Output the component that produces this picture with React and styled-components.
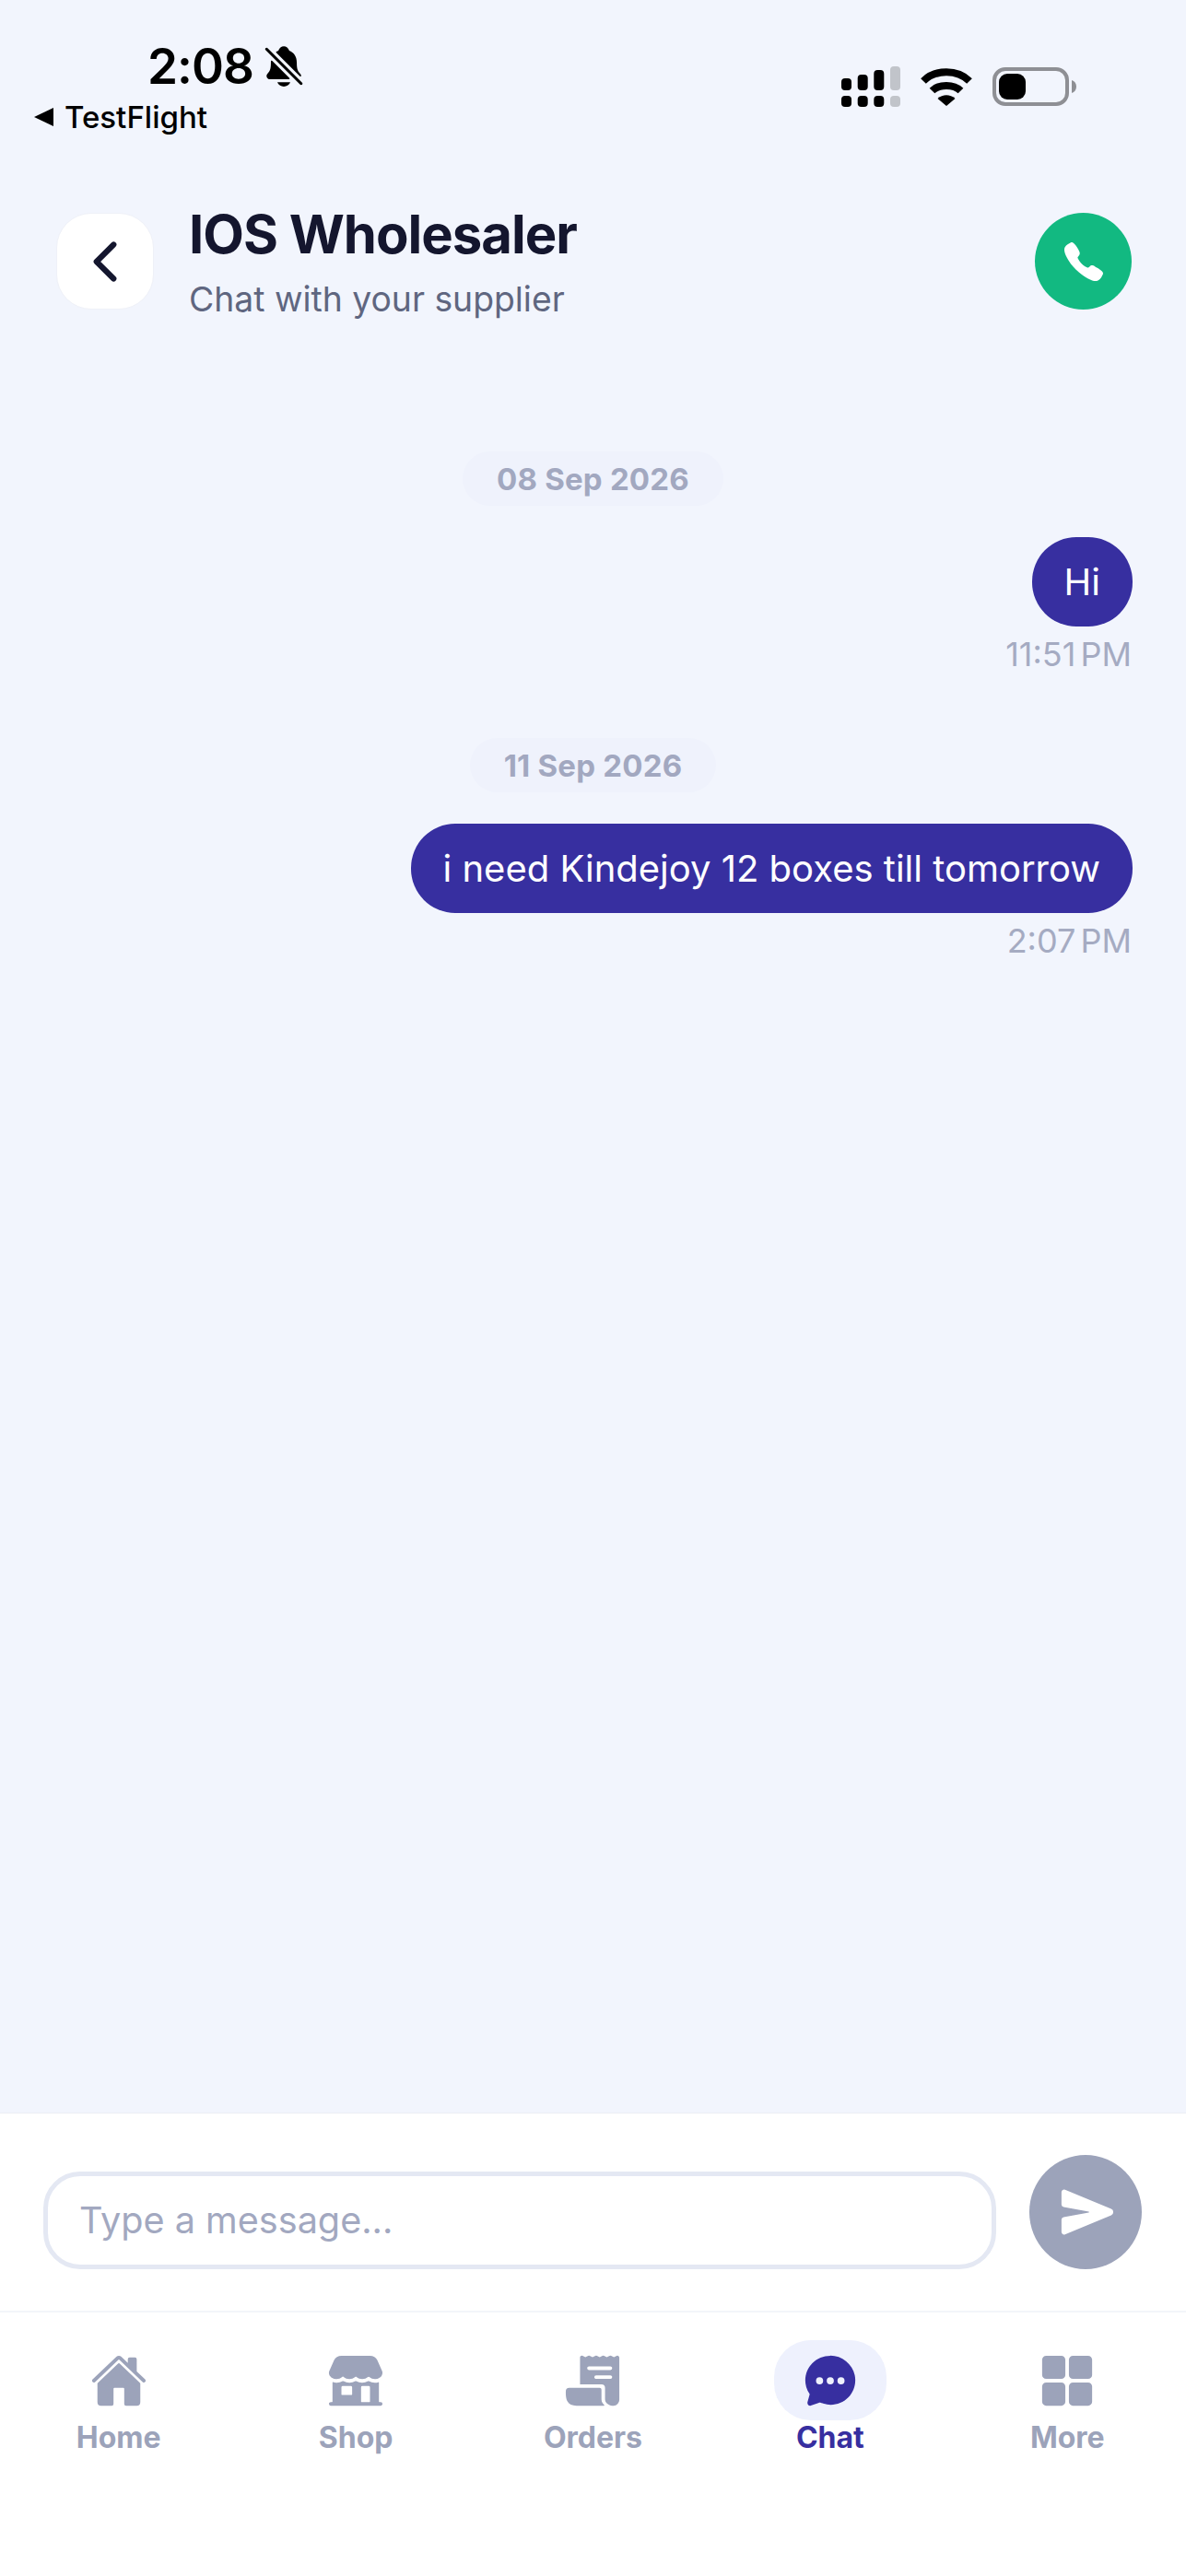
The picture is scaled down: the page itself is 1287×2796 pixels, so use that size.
import styled, { createGlobalStyle } from "styled-components"
import {
  IoCall,
  IoChatbubbleEllipses,
  IoChevronBack,
  IoGrid,
  IoHome,
  IoNotificationsOff,
  IoReceipt,
  IoSend,
  IoStorefront,
} from "react-icons/io5"

const GlobalStyle = createGlobalStyle`
  html, body {
    margin: 0;
    padding: 0;
    background: #f2f5fd;
  }
  * {
    box-sizing: border-box;
  }
`

const Page = styled.div`
  width: 1287px;
  height: 2796px;
  display: flex;
  flex-direction: column;
  background: #f2f5fd;
  font-family: Inter, "Noto Sans", sans-serif;
`

const StatusBar = styled.div`
  height: 231px;
  display: flex;
  justify-content: space-between;
  align-items: flex-start;
  padding: 42px 119px 0 37px;
  color: #000;
`

const StatusLeft = styled.div`
  display: flex;
  flex-direction: column;
`

const ClockRow = styled.div`
  display: flex;
  align-items: center;
  gap: 8px;
  height: 60px;
  padding-left: 123px;
  font-size: 53px;
  font-weight: 600;
  letter-spacing: -1px;
`

const BackToApp = styled.div`
  display: flex;
  align-items: center;
  gap: 12px;
  height: 40px;
  margin-top: 5px;
  font-size: 33px;
  font-weight: 500;
`

const StatusIcons = styled.div`
  display: flex;
  align-items: center;
  gap: 22px;
  margin-top: 30px;
`

const Header = styled.header`
  display: flex;
  align-items: flex-start;
  padding: 0 59px 0 61px;
`

const BackButton = styled.button`
  width: 106px;
  height: 105px;
  display: flex;
  align-items: center;
  justify-content: center;
  padding: 0;
  border: 1px solid #eff1f8;
  border-radius: 38px;
  background: #fff;
  color: #14162e;
`

const HeaderText = styled.div`
  flex: 1;
  margin-left: 38px;
`

const Title = styled.h1`
  margin: 0;
  font-size: 58px;
  line-height: 46px;
  font-weight: 700;
  letter-spacing: -1px;
  color: #14162e;
`

const Subtitle = styled.p`
  margin: 26px 0 0;
  font-size: 37.3px;
  line-height: 44px;
  font-weight: 400;
  color: #5f6680;
`

const CallButton = styled.button`
  width: 105px;
  height: 105px;
  display: flex;
  align-items: center;
  justify-content: center;
  padding: 0;
  border: none;
  border-radius: 50%;
  background: #12b981;
  color: #fff;
`

const Messages = styled.main`
  flex: 1;
  display: flex;
  flex-direction: column;
  padding: 143px 58px 0;
`

const DateGroup = styled.section`
  display: flex;
  flex-direction: column;
  align-items: flex-end;
  margin-bottom: 70px;
`

const DateChip = styled.div`
  align-self: center;
  height: 59px;
  display: flex;
  align-items: center;
  padding: 0 37px;
  border-radius: 30px;
  background: #eff2fc;
  font-size: 33px;
  font-weight: 700;
  letter-spacing: 0.2px;
  color: #a2a8c0;
`

const Bubble = styled.div`
  margin-top: 34px;
  height: 97px;
  display: flex;
  align-items: center;
  padding: 0 35px;
  border-radius: 48px;
  background: #372fa0;
  font-size: 40px;
  font-weight: 400;
  color: #fff;
`

const MessageTime = styled.div`
  margin-top: 9px;
  padding-right: 1px;
  font-size: 36px;
  line-height: 42px;
  word-spacing: -5px;
  color: #a5abc2;
`

const Composer = styled.div`
  height: 217px;
  display: flex;
  align-items: flex-end;
  gap: 36px;
  padding: 0 48px 45px 47px;
  border-top: 1px solid #eceef5;
  border-bottom: 2px solid #f3f5fa;
  background: #fff;
`

const MessageInput = styled.input`
  flex: 1;
  min-width: 0;
  height: 106px;
  padding: 0 34px;
  border: 5px solid #e4e8f3;
  border-radius: 40px;
  outline: none;
  background: #fff;
  font-family: inherit;
  font-size: 39.6px;
  color: #14162e;

  &::placeholder {
    color: #a2a8c0;
    opacity: 1;
  }
`

const SendButton = styled.button`
  width: 122px;
  height: 124px;
  flex-shrink: 0;
  display: flex;
  align-items: center;
  justify-content: center;
  padding: 0 0 0 4px;
  border: none;
  border-radius: 50%;
  background: #9ca3ba;
  color: #fff;
`

const Nav = styled.nav`
  height: 286px;
  display: grid;
  grid-template-columns: repeat(5, 1fr);
  padding-top: 30px;
  background: #fff;
`

const NavItem = styled.div`
  display: flex;
  flex-direction: column;
  align-items: center;
  color: ${(p) => (p.$active ? "#372fa0" : "#9ca3ba")};
`

const NavIcon = styled.div`
  width: 122px;
  height: 87px;
  display: flex;
  align-items: center;
  justify-content: center;
  border-radius: 40px;
  background: ${(p) => (p.$active ? "#eef1fd" : "transparent")};
`

const NavLabel = styled.div`
  margin-top: -1px;
  font-size: 32px;
  line-height: 40px;
  font-weight: 700;
`

const SignalIcon = () => (
  <svg width="64" height="44" viewBox="0 0 64 44">
    <rect x="0" y="13" width="11" height="13" rx="4" fill="#000" />
    <rect x="17.7" y="9" width="11" height="17" rx="4" fill="#000" />
    <rect x="35.3" y="4" width="11" height="22" rx="4" fill="#000" />
    <rect x="53" y="0" width="11" height="26" rx="4" fill="#c1c4ca" />
    <rect x="0" y="32" width="11" height="12" rx="4" fill="#000" />
    <rect x="17.7" y="32" width="11" height="12" rx="4" fill="#000" />
    <rect x="35.3" y="32" width="11" height="12" rx="4" fill="#000" />
    <rect x="53" y="32" width="11" height="12" rx="4" fill="#c1c4ca" />
  </svg>
)

const WifiIcon = () => (
  <svg width="56" height="41" viewBox="0 0 56 41">
    <path d="M3 14C16 1 40 1 53 14" fill="none" stroke="#000" strokeWidth="8" />
    <path d="M12.5 24.5C20 17 36 17 43.5 24.5" fill="none" stroke="#000" strokeWidth="8" />
    <path d="M18.5 33C24 28 32 28 37.5 33L28 41Z" fill="#000" />
  </svg>
)

const BatteryIcon = () => (
  <svg width="91" height="42" viewBox="0 0 91 42">
    <rect x="2" y="2" width="79" height="38" rx="12" fill="none" stroke="#8e8f94" strokeWidth="4" />
    <rect x="7" y="7" width="29" height="28" rx="9" fill="#000" />
    <path d="M86 14c3 1 5 3.500 5 7s-2 6-5 7Z" fill="#8e8f94" />
  </svg>
)

const navItems = [
  { label: "Home", icon: IoHome },
  { label: "Shop", icon: IoStorefront },
  { label: "Orders", icon: IoReceipt },
  { label: "Chat", icon: IoChatbubbleEllipses, active: true },
  { label: "More", icon: IoGrid },
]

const chat = [
  { date: "08 Sep 2026", text: "Hi", time: "11:51 PM" },
  { date: "11 Sep 2026", text: "i need Kindejoy 12 boxes till tomorrow", time: "2:07 PM" },
]

const App = () => {
  return (
    <Page>
      <GlobalStyle />
      <StatusBar>
        <StatusLeft>
          <ClockRow>
            2:08
            <IoNotificationsOff size={50} />
          </ClockRow>
          <BackToApp>
            <svg width="21" height="20" viewBox="0 0 21 20">
              <path d="M21 0V20L0 10Z" fill="#000" />
            </svg>
            TestFlight
          </BackToApp>
        </StatusLeft>
        <StatusIcons>
          <SignalIcon />
          <WifiIcon />
          <BatteryIcon />
        </StatusIcons>
      </StatusBar>

      <Header>
        <BackButton>
          <IoChevronBack size={66} />
        </BackButton>
        <HeaderText>
          <Title>IOS Wholesaler</Title>
          <Subtitle>Chat with your supplier</Subtitle>
        </HeaderText>
        <CallButton>
          <IoCall size={48} />
        </CallButton>
      </Header>

      <Messages>
        {chat.map((m) => (
          <DateGroup key={m.date}>
            <DateChip>{m.date}</DateChip>
            <Bubble>{m.text}</Bubble>
            <MessageTime>{m.time}</MessageTime>
          </DateGroup>
        ))}
      </Messages>

      <Composer>
        <MessageInput placeholder="Type a message..." />
        <SendButton>
          <IoSend size={60} />
        </SendButton>
      </Composer>

      <Nav>
        {navItems.map(({ label, icon: Icon, active }) => (
          <NavItem key={label} $active={active}>
            <NavIcon $active={active}>
              <Icon size={62} />
            </NavIcon>
            <NavLabel>{label}</NavLabel>
          </NavItem>
        ))}
      </Nav>
    </Page>
  )
}

export default App
